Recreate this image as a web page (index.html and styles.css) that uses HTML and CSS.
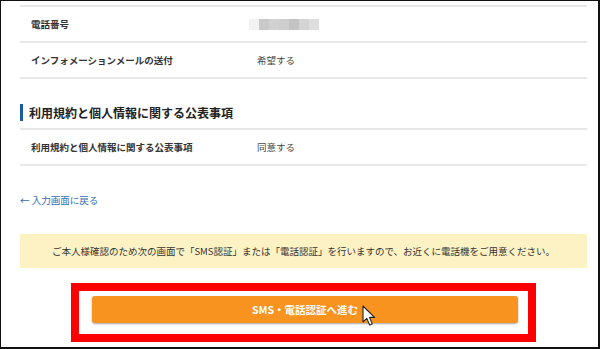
FILE: index.html
```html
<!DOCTYPE html>
<html lang="ja">

<head>
    <meta charset="UTF-8" />
    <title>入力内容の確認</title>
    <link rel="stylesheet" href="styles.css">
</head>

<body>
    <div class="frame">
        <div class="inner">

            <div class="confirm-table">
                <div class="row">
                    <div class="label">電話番号</div>
                    <div class="value">
                        <div class="blur">
                            <span class="c1"></span><span class="c2"></span><span class="c3"></span><span class="c4"></span><span class="c5"></span><span class="c6"></span><span class="c7"></span>
                        </div>
                    </div>
                </div>
                <div class="row">
                    <div class="label">インフォメーションメールの送付</div>
                    <div class="value">希望する</div>
                </div>
            </div>

            <h2 class="section-title">利用規約と個人情報に関する公表事項</h2>

            <div class="confirm-table">
                <div class="row">
                    <div class="label">利用規約と個人情報に関する公表事項</div>
                    <div class="value">同意する</div>
                </div>
            </div>

            <a class="back-link" href="#">← 入力画面に戻る</a>

            <div class="notice">ご本人様確認のため次の画面で「SMS認証」または「電話認証」を行いますので、お近くに電話機をご用意ください。</div>

            <div class="highlight">
                <button class="next-btn">SMS・電話認証へ進む
                    <svg class="cursor" width="14" height="22" viewBox="0 0 14 22">
                        <path d="M1 1 L1 17 L4.8 13.4 L7.6 20 L10.2 18.9 L7.5 12.4 L12.6 12.4 Z" fill="#fff" stroke="#222" stroke-width="1.1" stroke-linejoin="round" />
                    </svg>
                </button>
            </div>

        </div>
    </div>
</body>

</html>
```

FILE: styles.css
```css
html,
body {
    margin: 0;
    padding: 0;
    background: #fff;
}

.frame {
    width: 600px;
    height: 349px;
    box-sizing: border-box;
    border: 1px solid #111;
    border-right-width: 2px;
    border-bottom-width: 2px;
    overflow: hidden;
    font-family: "Noto Sans CJK JP", "Noto Sans", sans-serif;
    color: #333;
    font-size: 9.5px;
}

.inner {
    padding: 4px 11px 0 19px;
}

.confirm-table .row {
    display: grid;
    grid-template-columns: 226px 1fr;
    align-items: center;
    height: 34px;
    padding-left: 11px;
    border-top: 2px solid #e8e8e8;
}

.confirm-table .row:last-child {
    border-bottom: 2px solid #e8e8e8;
}

.label {
    font-weight: bold;
    color: #333;
}

.value {
    color: #444;
}

.blur {
    display: flex;
    margin-left: -8px;
}

.blur span {
    width: 10px;
    height: 11px;
}

.blur .c1 { background: #f2f2f2; }
.blur .c2 { background: #c9c9c9; }
.blur .c3 { background: #d1d1d1; }
.blur .c4 { background: #cecece; }
.blur .c5 { background: #c3c3c3; }
.blur .c6 { background: #d4d4d4; }
.blur .c7 { background: #dedede; }

.section-title {
    margin: 25px 0 7px;
    padding-left: 6px;
    border-left: 3px solid #1b5c9e;
    font-size: 12px;
    line-height: 17px;
    font-weight: bold;
    color: #222;
}

.back-link {
    display: block;
    margin-top: 27px;
    line-height: 14px;
    color: #2f6db5;
    text-decoration: none;
}

.notice {
    margin-top: 27px;
    height: 34px;
    line-height: 34px;
    background: #fdf2c4;
    text-align: center;
    color: #333;
}

.highlight {
    margin: 15px 0 0 51px;
    width: 465px;
    height: 59px;
    box-sizing: border-box;
    border: 8px solid #f00;
    padding: 5px 10px 0 13px;
}

.next-btn {
    position: relative;
    display: block;
    width: 100%;
    height: 27px;
    border: none;
    border-radius: 3px;
    background: #f7931e;
    box-shadow: 0 1px 2px rgba(0, 0, 0, 0.35);
    color: #fff;
    font-family: "Noto Sans CJK JP", "Noto Sans", sans-serif;
    font-size: 10.5px;
    font-weight: bold;
    cursor: pointer;
}

.cursor {
    position: absolute;
    left: 270px;
    top: 9px;
}
```
